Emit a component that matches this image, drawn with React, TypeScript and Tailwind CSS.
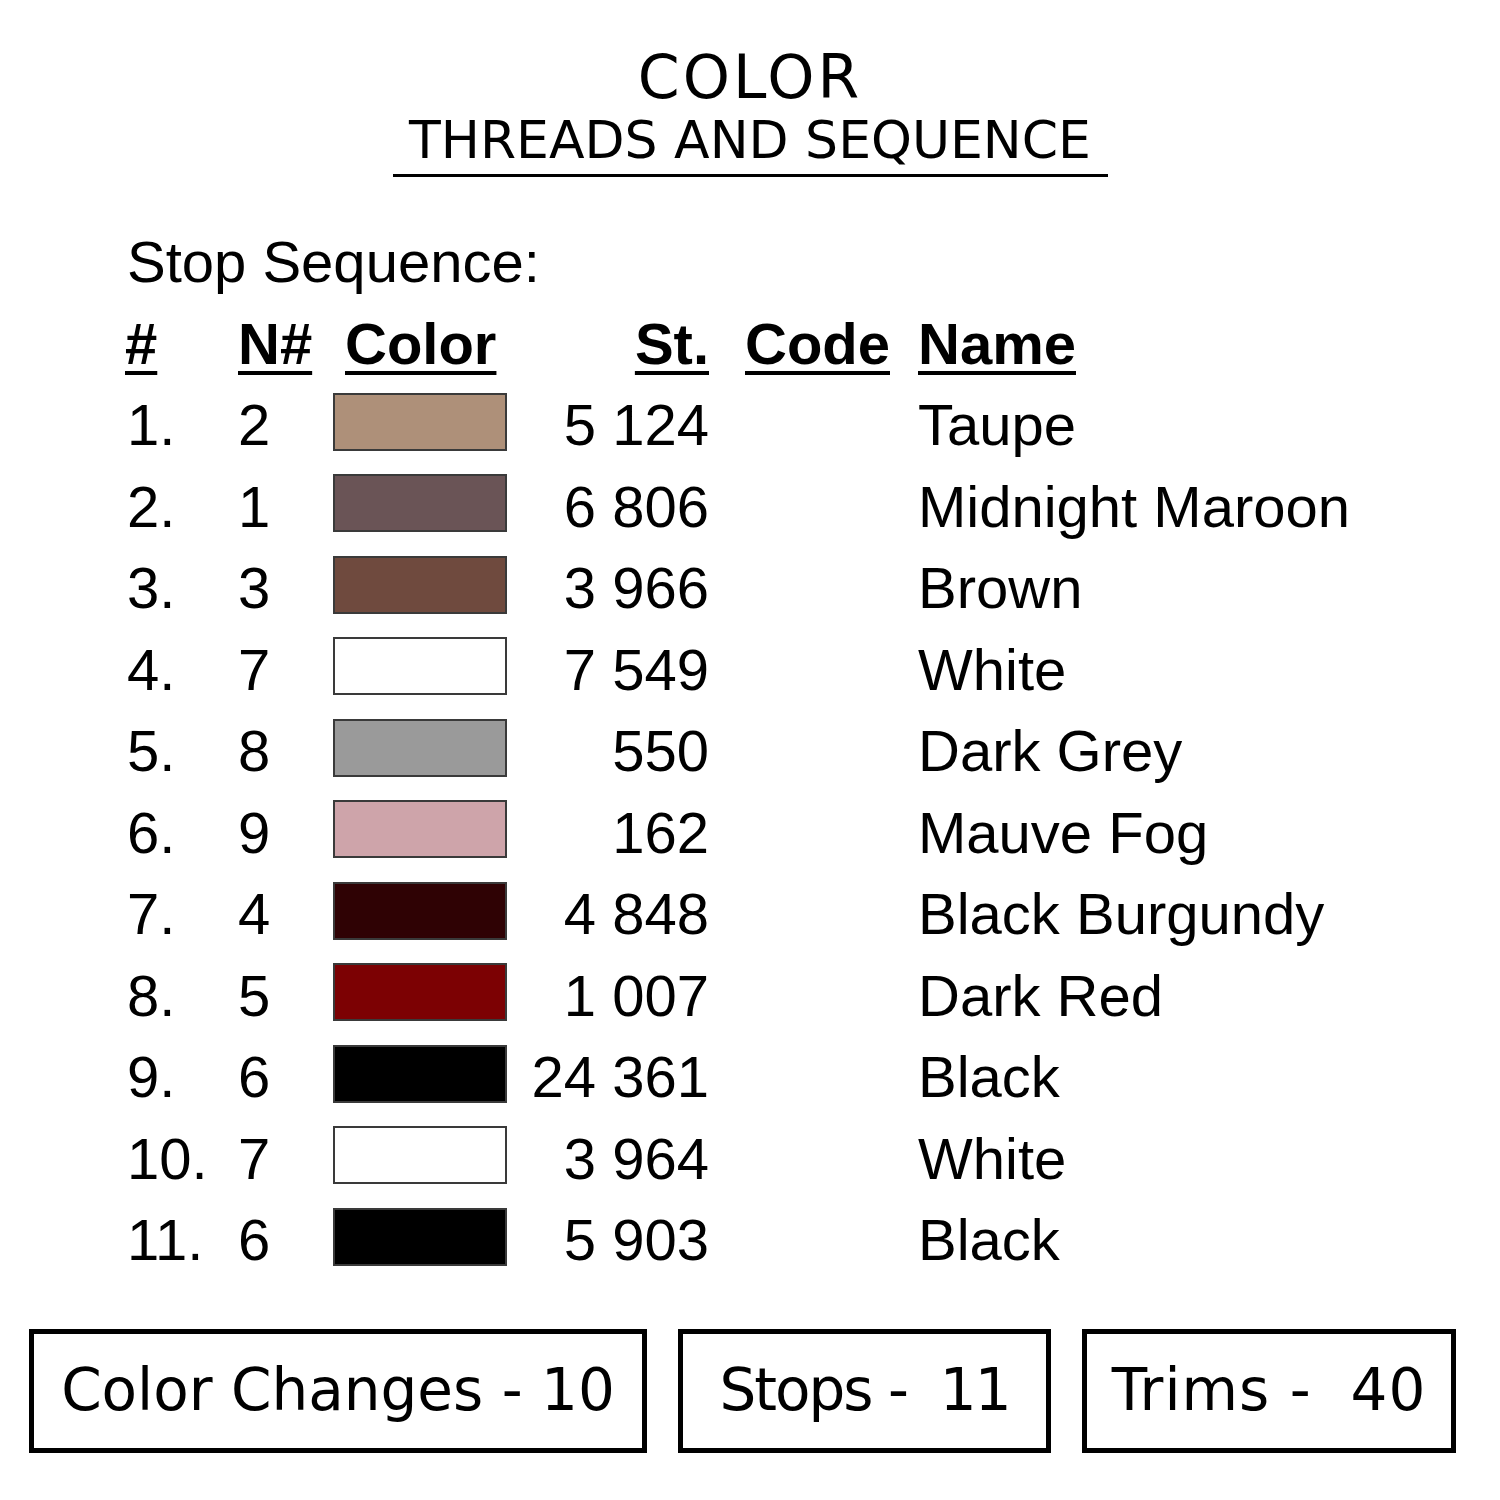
import React from 'react'

type Stop = { n: number; color: string; st: string; name: string }

const stops: Stop[] = [
  { n: 2, color: '#ae9079', st: '5 124', name: 'Taupe' },
  { n: 1, color: '#6a5456', st: '6 806', name: 'Midnight Maroon' },
  { n: 3, color: '#6f4a3e', st: '3 966', name: 'Brown' },
  { n: 7, color: '#ffffff', st: '7 549', name: 'White' },
  { n: 8, color: '#9a9a9a', st: '550', name: 'Dark Grey' },
  { n: 9, color: '#cea4aa', st: '162', name: 'Mauve Fog' },
  { n: 4, color: '#2f0204', st: '4 848', name: 'Black Burgundy' },
  { n: 5, color: '#7c0103', st: '1 007', name: 'Dark Red' },
  { n: 6, color: '#000000', st: '24 361', name: 'Black' },
  { n: 7, color: '#ffffff', st: '3 964', name: 'White' },
  { n: 6, color: '#000000', st: '5 903', name: 'Black' },
]

const head = "underline decoration-[4px] underline-offset-[7px] font-bold"

export default function App() {
  return (
    <div className="w-[1500px] h-[1500px] bg-white text-black overflow-hidden">
      <div className="flex flex-col items-center pt-[44px] font-['DejaVu_Sans',sans-serif]">
        <h1 className="text-[60px] leading-[67px] tracking-[3px] font-normal">COLOR</h1>
        <h2 className="text-[52px] leading-[58px] font-normal">THREADS AND SEQUENCE</h2>
        <div className="mt-[5px] w-[715px] h-[3px] bg-black" />
      </div>

      <div className="mt-[44px] pl-[125px] font-['Liberation_Sans',Arial,sans-serif] text-[58px] leading-[81.5px]">
        <div className="pl-[2px]">Stop Sequence:</div>
        <div className="flex">
          <div className="w-[113px]"><span className={head}>#</span></div>
          <div className="w-[95px]"><span className={head}>N#</span></div>
          <div className="w-[174px] pl-[12px]"><span className={head}>Color</span></div>
          <div className="w-[202px] text-right"><span className={head}>St.</span></div>
          <div className="w-[209px] pl-[36px]"><span className={head}>Code</span></div>
          <div><span className={head}>Name</span></div>
        </div>
        {stops.map((s, i) => (
          <div key={i} className="flex items-center h-[81.5px]">
            <div className="w-[113px] pl-[2px]">{i + 1}.</div>
            <div className="w-[95px]">{s.n}</div>
            <div className="w-[174px] pb-[6px]">
              <div
                className="h-[58px] w-[174px] border-2 border-[#3a3a3a]"
                style={{ backgroundColor: s.color }}
              />
            </div>
            <div className="w-[202px] text-right">{s.st}</div>
            <div className="w-[209px]" />
            <div>{s.name}</div>
          </div>
        ))}
      </div>

      <div className="mt-[48px] flex pl-[29px] gap-[31px] font-['DejaVu_Sans',sans-serif] text-[58px]">
        <div className="w-[618px] h-[124px] border-[5px] border-black flex items-center justify-center">
          Color Changes - 10
        </div>
        <div className="w-[373px] h-[124px] border-[5px] border-black flex items-center justify-center whitespace-pre tracking-[-2px]">
          {'Stops -  11'}
        </div>
        <div className="w-[374px] h-[124px] border-[5px] border-black flex items-center justify-center whitespace-pre tracking-[1px]">
          {'Trims -  40'}
        </div>
      </div>
    </div>
  )
}
